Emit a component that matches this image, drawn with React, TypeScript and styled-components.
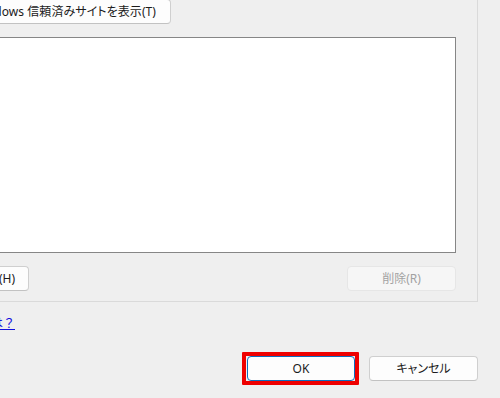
import styled, { createGlobalStyle } from "styled-components";

const GlobalStyle = createGlobalStyle`
    html, body {
        margin: 0;
        padding: 0;
        background: #efefef;
        overflow: hidden;
    }
    body {
        font-family: "Noto Sans", "Noto Sans CJK JP", sans-serif;
        font-size: 12px;
        font-feature-settings: "palt";
        color: #1b1b1b;
    }
`;

const Page = styled.div`
    width: 500px;
    height: 398px;
    overflow: hidden;
`;

// the dialog is wider than the shot, its left part is cut off
const Dialog = styled.div`
    width: 538px;
    margin: -20px 0 0 -60px;
    display: flex;
    flex-direction: column;
`;

const Panel = styled.section`
    box-sizing: border-box;
    width: 100%;
    padding: 19px 21px 10px 21px;
    border-right: 1px solid #dadada;
    border-bottom: 1px solid #dadada;
    display: flex;
    flex-direction: column;
`;

const Button = styled.button<{ $w: number; $disabled?: boolean }>`
    box-sizing: border-box;
    width: ${(p) => p.$w}px;
    height: 25px;
    padding: 0;
    border: 1px solid ${(p) => (p.$disabled ? "#e6e6e6" : "#cfcfcf")};
    border-bottom-color: ${(p) => (p.$disabled ? "#e6e6e6" : "#c2c2c2")};
    border-radius: 4px;
    background: ${(p) => (p.$disabled ? "#f6f6f6" : "#fdfdfd")};
    color: ${(p) => (p.$disabled ? "#a2a2a2" : "#1b1b1b")};
    font-family: inherit;
    font-size: 12px;
    font-feature-settings: "palt";
    line-height: 23px;
    white-space: nowrap;
    text-align: center;
    flex-shrink: 0;
`;

const TopButton = styled(Button)`
    text-align: right;
    padding-right: 14px;
    letter-spacing: 0.07px;
`;

const ListBox = styled.div`
    box-sizing: border-box;
    height: 216px;
    margin: 13px 0;
    background: #fff;
    border: 1px solid #868686;
`;

const ButtonRow = styled.div`
    display: flex;
    justify-content: space-between;
    align-items: center;
`;

const LinkRow = styled.div`
    width: 75px;
    margin-top: 14px;
    display: flex;
    justify-content: flex-end;
    white-space: nowrap;
    line-height: 16px;
`;

const HelpLink = styled.a`
    color: #1111dd;
    text-decoration: underline;
    font-feature-settings: normal;
    cursor: pointer;
`;

const Footer = styled.div`
    margin-top: 20px;
    display: flex;
    justify-content: flex-end;
    align-items: center;
    gap: 10px;
`;

// red box drawn round the focused button in the screenshot
const Highlight = styled.div`
    box-sizing: border-box;
    width: 117px;
    padding: 0 0 0 1px;
    border: 4px solid #ee0000;
    border-radius: 1px;
    display: flex;
`;

const FocusButton = styled(Button)`
    border: 1px solid #0f6cbd;
`;

const App = () => {
    return (
        <Page>
            <GlobalStyle />
            <Dialog>
                <Panel>
                    <div>
                        <TopButton $w={210}>Windows 信頼済みサイトを表示(T)</TopButton>
                    </div>
                    <ListBox />
                    <ButtonRow>
                        <Button $w={68}>追加(H)</Button>
                        <Button $w={109} $disabled>削除(R)</Button>
                    </ButtonRow>
                </Panel>
                <LinkRow>
                    <HelpLink>設定の詳細とは？</HelpLink>
                </LinkRow>
                <Footer>
                    <Highlight>
                        <FocusButton $w={108}>OK</FocusButton>
                    </Highlight>
                    <Button $w={109}>キャンセル</Button>
                </Footer>
            </Dialog>
        </Page>
    )
}

export default App
